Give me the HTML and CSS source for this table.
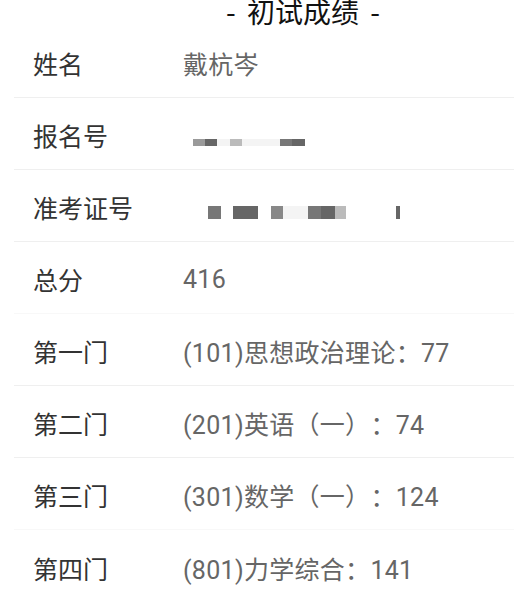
FILE: index.html
```html
<!DOCTYPE html>
<html lang="zh-CN">
<head>
    <meta charset="UTF-8">
    <meta name="viewport" content="width=device-width, initial-scale=1.0">
    <title>初试成绩</title>
    <link rel="stylesheet" href="styles.css">
</head>
<body>
    <div class="title">- 初试成绩 -</div>
    <div class="score-list">
        <div class="row">
            <span class="label">姓名</span>
            <span class="value">戴杭岑</span>
        </div>
        <div class="row">
            <span class="label">报名号</span>
            <span class="value mosaic small">
                <i class="gap w10"></i><i class="c9 w12"></i><i class="c6 w12"></i><i class="cf w13"></i><i class="cb w12"></i><i class="cf w38"></i><i class="c7 w12"></i><i class="c6 w13"></i>
            </span>
        </div>
        <div class="row">
            <span class="label">准考证号</span>
            <span class="value mosaic big">
                <i class="gap w25"></i><i class="c7 w13"></i><i class="gap w12"></i><i class="c6 w25"></i><i class="gap w13"></i><i class="c8 w12"></i><i class="cf w25"></i><i class="c7 w13"></i><i class="c6 w14"></i><i class="cb w11"></i><i class="gap w50"></i><i class="c6 w4"></i>
            </span>
        </div>
        <div class="row faint">
            <span class="label">总分</span>
            <span class="value">416</span>
        </div>
        <div class="row">
            <span class="label">第一门</span>
            <span class="value">(101)思想政治理论：77</span>
        </div>
        <div class="row">
            <span class="label">第二门</span>
            <span class="value">(201)英语（一）：74</span>
        </div>
        <div class="row faint">
            <span class="label">第三门</span>
            <span class="value">(301)数学（一）：124</span>
        </div>
        <div class="row last">
            <span class="label">第四门</span>
            <span class="value">(801)力学综合：141</span>
        </div>
    </div>
</body>
</html>
```

FILE: styles.css
```css
body {
    margin: 0;
    padding: 0;
    background: #fff;
    font-family: "Noto Sans CJK SC", "Noto Sans", sans-serif;
}
.title {
    height: 29px;
    margin-top: -3px;
    padding-left: 92px;
    font-size: 28px;
    line-height: 28px;
    word-spacing: 5px;
    color: #111;
    text-align: center;
    white-space: pre;
}
.score-list {
    margin-left: 14px;
}
.row {
    display: flex;
    align-items: center;
    height: 72px;
    padding-top: 3px;
    box-sizing: border-box;
    border-bottom: 1px solid #efefef;
    font-size: 25px;
}
.row.faint {
    border-bottom-color: #f8f8f8;
}
.row.last {
    border-bottom: none;
}
.label {
    width: 150px;
    margin-left: 19px;
    color: #333;
}
.value {
    font-family: Roboto, "Noto Sans CJK SC", sans-serif;
    color: #666;
    letter-spacing: 0.3px;
    text-spacing-trim: space-all;
}
.mosaic {
    display: flex;
}
.mosaic i {
    display: block;
}
.mosaic.small i {
    height: 7px;
    margin-top: 14px;
}
.mosaic.big i {
    height: 13px;
    margin-top: 10px;
}
.gap { background: transparent; }
.c6 { background: #666; }
.c7 { background: #777; }
.c8 { background: #888; }
.c9 { background: #9a9a9a; }
.cb { background: #bbb; }
.cf { background: #f4f4f4; }
.w4 { width: 4px; }
.w10 { width: 10px; }
.w11 { width: 11px; }
.w12 { width: 12px; }
.w13 { width: 13px; }
.w14 { width: 14px; }
.w25 { width: 25px; }
.w38 { width: 38px; }
.w50 { width: 50px; }
```
